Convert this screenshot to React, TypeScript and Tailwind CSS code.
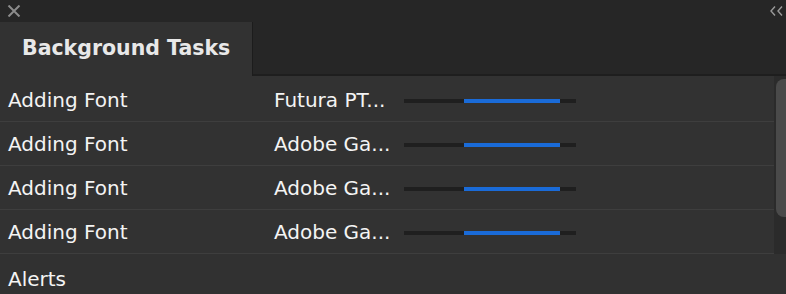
const rows = [
  { task: 'Adding Font', name: 'Futura PT...' },
  { task: 'Adding Font', name: 'Adobe Ga...' },
  { task: 'Adding Font', name: 'Adobe Ga...' },
  { task: 'Adding Font', name: 'Adobe Ga...' },
];

function ProgressBar() {
  return (
    <div className="h-[4px] w-[172px] bg-[#1f1f1f]">
      <div className="ml-[60px] h-full w-[96px] bg-[#1a6bd8]" />
    </div>
  );
}

export default function App() {
  return (
    <div
      className="flex h-[294px] w-[786px] flex-col overflow-hidden bg-[#323232] text-[20px] text-[#f4f4f4]"
      style={{ fontFamily: '"DejaVu Sans", "Liberation Sans", sans-serif' }}
    >
      {/* window chrome */}
      <div className="flex h-[22px] shrink-0 items-center justify-between bg-[#262626] pl-[7px] pr-[2px]">
        <svg width="14" height="12" viewBox="0 0 14 12" className="text-[#8c8c8c]">
          <path d="M1.5 0.5L12.5 11.5M12.5 0.5L1.5 11.5" stroke="currentColor" strokeWidth="2" fill="none" />
        </svg>
        <svg width="14" height="10" viewBox="0 0 14 10" className="text-[#9a9a9a]">
          <path d="M5 0.5L1 5L5 9.5M12 0.5L8 5L12 9.5" stroke="currentColor" strokeWidth="1.4" fill="none" />
        </svg>
      </div>

      {/* tabs */}
      <div className="flex h-[54px] shrink-0 bg-[#262626]">
        <div className="flex w-[252px] items-center bg-[#323232] pl-[22px] pb-[2px] text-[20.5px] font-bold text-[#e8e8e8]">
          Background Tasks
        </div>
        <div className="w-[1px] bg-[#1c1c1c]" />
        <div className="flex-1 border-b-[2px] border-[#1e1e1e]" />
      </div>

      {/* task list */}
      <div className="flex h-[178px] shrink-0">
        <div className="flex-1 pt-[2px]">
          {rows.map((row, i) => (
            <div key={i} className="flex h-[44px] items-center border-b border-[#3e3e3e]">
              <div className="w-[274px] pl-[8px]">{row.task}</div>
              <div className="w-[130px]">{row.name}</div>
              <div className="pt-[2px]">
                <ProgressBar />
              </div>
            </div>
          ))}
        </div>
        <div className="w-[12px] bg-[#2b2b2b] pl-[2px] pt-[3px]">
          <div className="h-[138px] rounded-l-[8px] bg-[#4a4a4a]" />
        </div>
      </div>

      {/* alerts */}
      <div className="flex min-h-0 flex-1 items-center bg-[#313131] pl-[8px] pt-[10px]">Alerts</div>
    </div>
  );
}
